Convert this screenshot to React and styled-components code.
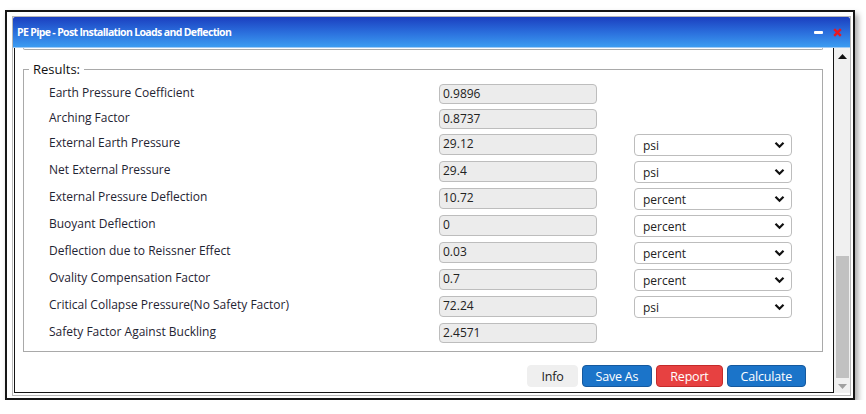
import React from "react";
import styled, { createGlobalStyle } from "styled-components";

const GlobalStyle = createGlobalStyle`
	body {
		margin: 0;
		background: #ffffff;
		font-family: "Open Sans", "Noto Sans", sans-serif;
	}
`;

const Page = styled.div`
	padding: 10px 0 0 5px;
`;

const Frame = styled.div`
	box-sizing: border-box;
	width: 850px;
	height: 390px;
	border: 2px solid #161616;
	background: #ffffff;
	padding: 4px 2px 2px 5px;
	box-shadow: 3px 4px 6px rgba(0, 0, 0, 0.35);
`;

const Window = styled.div`
	box-sizing: border-box;
	height: 100%;
	border: 1px solid #b8b8b8;
	display: flex;
	flex-direction: column;
`;

const TitleBar = styled.div`
	height: 30px;
	flex: none;
	display: flex;
	align-items: center;
	justify-content: space-between;
	padding: 0 8px 0 4px;
	background: linear-gradient(to bottom, #1b3fbf 0%, #2a6ddc 50%, #3c9cf1 100%);
	border-bottom: 1px solid #9fcaf5;
	border-radius: 2px 2px 0 0;
`;

const Title = styled.span`
	color: #ffffff;
	font-weight: 700;
	font-size: 10.5px;
	letter-spacing: -0.65px;
`;

const TitleIcons = styled.div`
	display: flex;
	align-items: center;
	gap: 10px;
`;

const Minimize = styled.span`
	display: block;
	width: 9px;
	height: 3px;
	border-radius: 1px;
	background: #ffffff;
`;

const Body = styled.div`
	flex: 1;
	display: flex;
	min-height: 0;
	padding: 0 0 2px 1px;
`;

const Content = styled.div`
	flex: 1;
	border: 1px solid #141414;
	border-top: none;
	padding: 0 10px 0 8px;
	overflow: hidden;
`;

const PrevSectionEnd = styled.div`
	height: 1px;
	border: 1px solid #a9a9a9;
	border-top: none;
	border-radius: 0 0 2px 2px;
	margin-bottom: 10px;
`;

const Fieldset = styled.fieldset`
	margin: 0;
	border: 1px solid #a9a9a9;
	padding: 6px 0 8px 0;
`;

const Legend = styled.legend`
	margin-left: 5px;
	padding: 0 4px;
	font-size: 13px;
	color: #111;
`;

const Rows = styled.div`
	display: flex;
	flex-direction: column;
	gap: 5px;
	padding-left: 25px;
`;

const Row = styled.div`
	display: grid;
	grid-template-columns: 390px 158px 158px;
	align-items: center;
	min-height: 20px;
`;

const Label = styled.span`
	font-size: 12px;
	color: #1f2433;
	align-self: start;
	line-height: 17px;
`;

const ValueBox = styled.div`
	box-sizing: border-box;
	height: ${(p) => (p.$tall ? "21px" : "20px")};
	border: 1px solid #bdbdbd;
	border-radius: 4px;
	background: #ececec;
	font-size: 12px;
	color: #222;
	padding: 0 3px;
	line-height: 18px;
	align-self: start;
`;

const Select = styled.div`
	box-sizing: border-box;
	height: 22px;
	margin-left: 37px;
	width: 158px;
	border: 1px solid #bdbdbd;
	border-radius: 4px;
	background: #ffffff;
	font-size: 12px;
	color: #222;
	padding: 0 6px 0 8px;
	display: flex;
	align-items: center;
	justify-content: space-between;
`;

const Footer = styled.div`
	display: flex;
	justify-content: flex-end;
	gap: 4px;
	margin: 13px 17px 0 0;
`;

const Button = styled.button`
	height: 22px;
	box-sizing: border-box;
	padding: 0 13px;
	font-family: "Open Sans", "Noto Sans", sans-serif;
	font-size: 12.5px;
	letter-spacing: -0.2px;
	border-radius: 4px;
	border: 1px solid ${(p) => p.$border};
	background: ${(p) => p.$bg};
	color: ${(p) => p.$color};
	cursor: pointer;
`;

const Scrollbar = styled.div`
	width: 16px;
	flex: none;
	background: #f0f0f0;
	display: flex;
	flex-direction: column;
	align-items: center;
	padding: 6px 0 4px;
	box-sizing: border-box;
`;

const Track = styled.div`
	flex: 1;
	width: 100%;
	display: flex;
	flex-direction: column;
	justify-content: flex-end;
	padding: 6px 1px 6px 2px;
	box-sizing: border-box;
`;

const Thumb = styled.div`
	height: 122px;
	background: #c1c1c1;
`;

const Chevron = () => (
	<svg width="11" height="8" viewBox="0 0 11 8">
		<path d="M1.5 1.8 L5.5 5.8 L9.5 1.8" fill="none" stroke="#111" strokeWidth="2.2" />
	</svg>
);

const CloseIcon = () => (
	<svg width="9" height="9" viewBox="0 0 9 9">
		<path d="M1.2 1.2 L7.8 7.8 M7.8 1.2 L1.2 7.8" stroke="#ea1720" strokeWidth="2.4" />
	</svg>
);

const Arrow = ({ up, color }) => (
	<svg width="9" height="5" viewBox="0 0 9 5">
		<path d={up ? "M0 5 L4.5 0 L9 5 Z" : "M0 0 L4.5 5 L9 0 Z"} fill={color} />
	</svg>
);

const rows = [
	{ label: "Earth Pressure Coefficient", value: "0.9896" },
	{ label: "Arching Factor", value: "0.8737" },
	{ label: "External Earth Pressure", value: "29.12", unit: "psi" },
	{ label: "Net External Pressure", value: "29.4", unit: "psi" },
	{ label: "External Pressure Deflection", value: "10.72", unit: "percent" },
	{ label: "Buoyant Deflection", value: "0", unit: "percent" },
	{ label: "Deflection due to Reissner Effect", value: "0.03", unit: "percent" },
	{ label: "Ovality Compensation Factor", value: "0.7", unit: "percent" },
	{ label: "Critical Collapse Pressure(No Safety Factor)", value: "72.24", unit: "psi" },
	{ label: "Safety Factor Against Buckling", value: "2.4571" },
];

export default function App() {
	return (
		<Page>
			<GlobalStyle />
			<Frame>
				<Window>
					<TitleBar>
						<Title>PE Pipe - Post Installation Loads and Deflection</Title>
						<TitleIcons>
							<Minimize />
							<CloseIcon />
						</TitleIcons>
					</TitleBar>
					<Body>
						<Content>
							<PrevSectionEnd />
							<Fieldset>
								<Legend>Results:</Legend>
								<Rows>
									{rows.map((r) => (
										<Row key={r.label}>
											<Label>{r.label}</Label>
											<ValueBox $tall={!!r.unit}>{r.value}</ValueBox>
											{r.unit && (
												<Select>
													{r.unit}
													<Chevron />
												</Select>
											)}
										</Row>
									))}
								</Rows>
							</Fieldset>
							<Footer>
								<Button $bg="#efefef" $border="#efefef" $color="#222">
									Info
								</Button>
								<Button $bg="#1b74c9" $border="#15599e" $color="#fff">
									Save As
								</Button>
								<Button $bg="#e74141" $border="#c42a2a" $color="#fff">
									Report
								</Button>
								<Button $bg="#1b74c9" $border="#15599e" $color="#fff">
									Calculate
								</Button>
							</Footer>
						</Content>
						<Scrollbar>
							<Arrow up color="#111" />
							<Track>
								<Thumb />
							</Track>
							<Arrow color="#a0a0a0" />
						</Scrollbar>
					</Body>
				</Window>
			</Frame>
		</Page>
	);
}
